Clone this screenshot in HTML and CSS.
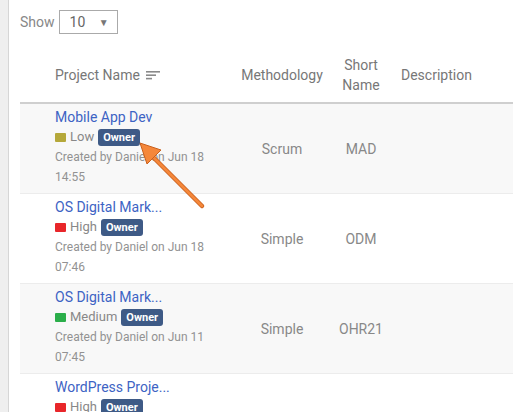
FILE: index.html
```html
<!DOCTYPE html>
<html lang="en">
<head>
    <meta charset="UTF-8">
    <title>Projects</title>
    <link rel="stylesheet" href="styles.css">
</head>
<body>
    <div class="page">
        <div class="length">
            <span>Show</span>
            <div class="select">
                <span>10</span>
                <span class="caret">&#9660;</span>
            </div>
        </div>

        <table class="projects">
            <thead>
                <tr>
                    <th class="col-name">
                        <span class="sortable">Project Name
                            <svg class="sort-icon" width="14" height="10" viewBox="0 0 14 10">
                                <rect x="0" y="0" width="14" height="1.6" fill="#8a8a8a"/>
                                <rect x="0" y="3.4" width="10" height="1.6" fill="#8a8a8a"/>
                                <rect x="0" y="6.8" width="6" height="1.6" fill="#8a8a8a"/>
                            </svg>
                        </span>
                    </th>
                    <th class="col-method">Methodology</th>
                    <th class="col-short">Short<br>Name</th>
                    <th class="col-desc">Description</th>
                </tr>
            </thead>
            <tbody>
                <tr class="odd">
                    <td class="col-name">
                        <a href="#" class="title">Mobile App Dev</a>
                        <div class="priority"><span class="dot low"></span>Low <span class="badge">Owner</span></div>
                        <div class="meta">Created by Daniel on Jun 18</div>
                        <div class="meta">14:55</div>
                    </td>
                    <td class="col-method">Scrum</td>
                    <td class="col-short">MAD</td>
                    <td class="col-desc"></td>
                </tr>
                <tr>
                    <td class="col-name">
                        <a href="#" class="title">OS Digital Mark...</a>
                        <div class="priority"><span class="dot high"></span>High <span class="badge">Owner</span></div>
                        <div class="meta">Created by Daniel on Jun 18</div>
                        <div class="meta">07:46</div>
                    </td>
                    <td class="col-method">Simple</td>
                    <td class="col-short">ODM</td>
                    <td class="col-desc"></td>
                </tr>
                <tr class="odd">
                    <td class="col-name">
                        <a href="#" class="title">OS Digital Mark...</a>
                        <div class="priority"><span class="dot medium"></span>Medium <span class="badge">Owner</span></div>
                        <div class="meta">Created by Daniel on Jun 11</div>
                        <div class="meta">07:45</div>
                    </td>
                    <td class="col-method">Simple</td>
                    <td class="col-short">OHR21</td>
                    <td class="col-desc"></td>
                </tr>
                <tr>
                    <td class="col-name">
                        <a href="#" class="title">WordPress Proje...</a>
                        <div class="priority"><span class="dot high"></span>High <span class="badge">Owner</span></div>
                        <div class="meta">Created by Daniel on Jun 10</div>
                        <div class="meta">09:12</div>
                    </td>
                    <td class="col-method">Simple</td>
                    <td class="col-short">WP</td>
                    <td class="col-desc"></td>
                </tr>
            </tbody>
        </table>

        <svg class="arrow" width="80" height="80" viewBox="0 0 80 80">
            <line x1="70" y1="72" x2="16" y2="18" stroke="#c9601c" stroke-width="4.5" stroke-linecap="round"/>
            <line x1="70" y1="72" x2="16" y2="18" stroke="#f5873a" stroke-width="2.8" stroke-linecap="round"/>
            <polygon points="8,9 29,16 15,30" fill="#f5873a" stroke="#c9601c" stroke-width="1" stroke-linejoin="round"/>
        </svg>
    </div>
</body>
</html>
```

FILE: styles.css
```css
body {
    margin: 0;
    background-color: #efefef;
    font-family: Roboto, "Liberation Sans", sans-serif;
    color: #777;
    overflow: hidden;
}
.page {
    position: relative;
    margin-left: 8px;
    height: 100vh;
    background-color: #fff;
    border-left: 1px solid #d6d6d6;
    padding: 10px 0 0 11px;
    box-sizing: border-box;
    overflow: hidden;
}
.length {
    display: flex;
    align-items: center;
    gap: 4px;
    font-size: 14px;
    color: #888;
}
.select {
    display: flex;
    align-items: center;
    justify-content: space-between;
    width: 59px;
    height: 24px;
    box-sizing: border-box;
    border: 1px solid #aaa;
    padding: 0 8px 0 10px;
    color: #666;
    font-size: 14px;
}
.caret {
    font-size: 10px;
    color: #777;
}
.projects {
    margin-top: 14px;
    width: 493px;
    border-collapse: collapse;
    table-layout: fixed;
    font-size: 14px;
}
.projects th {
    height: 54px;
    font-weight: normal;
    color: #777;
    line-height: 20px;
    border-bottom: 2px solid #cfcfcf;
    vertical-align: middle;
}
.projects td {
    height: 90px;
    box-sizing: border-box;
    border-bottom: 1px solid #ececec;
    vertical-align: middle;
    color: #888;
}
.projects tr.odd td {
    background-color: #f8f8f8;
}
.col-name {
    width: 175px;
    text-align: left;
}
.projects th.col-name {
    padding: 0 0 0 35px;
}
.projects td.col-name {
    padding: 3px 0 6px 35px;
}
.col-method {
    width: 104px;
    text-align: center;
}
.col-short {
    width: 54px;
    text-align: center;
}
.projects .col-method,
.projects .col-short {
    padding: 0;
}
.projects .col-desc {
    padding: 0 0 0 13px;
    text-align: left;
}
.sortable {
    display: inline-flex;
    align-items: center;
    gap: 6px;
}
.sort-icon {
    margin-top: 2px;
}
.title {
    display: block;
    color: #3d63c4;
    text-decoration: none;
    font-size: 14px;
    line-height: 20px;
}
.priority {
    display: flex;
    align-items: center;
    line-height: 20px;
    font-size: 13px;
    color: #888;
}
.dot {
    width: 11px;
    height: 9px;
    border-radius: 1px;
    margin-right: 4px;
}
.dot.low {
    background-color: #b5a83a;
}
.dot.high {
    background-color: #e8262a;
}
.dot.medium {
    background-color: #2bae4a;
}
.badge {
    margin-left: 4px;
    padding: 0 5px;
    background-color: #3e5a86;
    color: #fff;
    font-size: 11px;
    font-weight: bold;
    line-height: 17px;
    border-radius: 3px;
}
.meta {
    font-size: 12px;
    line-height: 20px;
    color: #929292;
}
.arrow {
    position: absolute;
    left: 123px;
    top: 134px;
}
```
